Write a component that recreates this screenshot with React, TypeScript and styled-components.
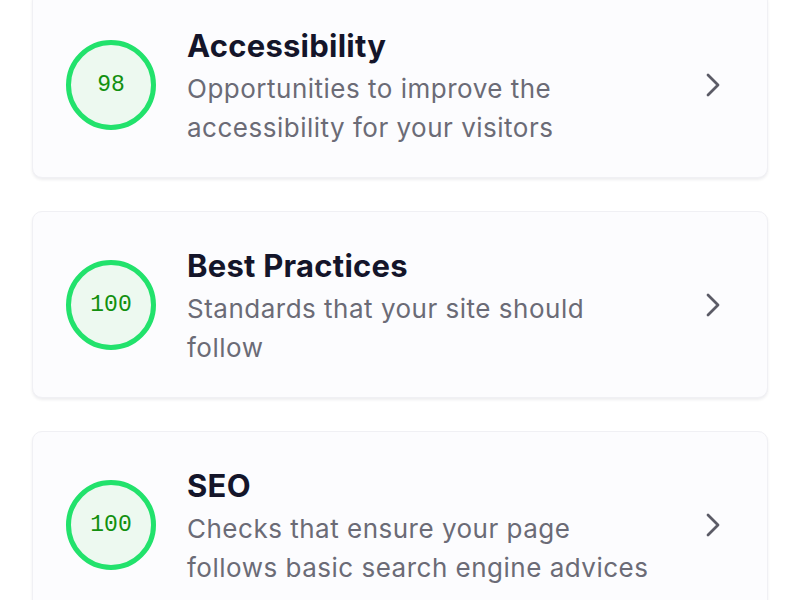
import React from 'react';
import styled, { createGlobalStyle } from 'styled-components';

type Audit = {
  score: number,
  title: string,
  description: string,
};

const audits: Audit[] = [
  {
    score: 98,
    title: 'Accessibility',
    description: 'Opportunities to improve the accessibility for your visitors',
  },
  {
    score: 100,
    title: 'Best Practices',
    description: 'Standards that your site should follow',
  },
  {
    score: 100,
    title: 'SEO',
    description: 'Checks that ensure your page follows basic search engine advices',
  },
];

const Chevron = () => (
  <svg width="16" height="26" viewBox="0 0 16 26" fill="none">
    <polyline
      points="3,3 13,13 3,23"
      stroke="#5b5b66"
      strokeWidth="2.8"
      strokeLinecap="round"
      strokeLinejoin="round"
    />
  </svg>
);

export default function App() {
  return (
    <>
      <GlobalStyle />
      <Page>
        <AuditList>
          {audits.map((audit) => (
            <AuditCard key={audit.title}>
              <ScoreRing>
                <Score>{audit.score}</Score>
              </ScoreRing>
              <AuditText>
                <AuditTitle>{audit.title}</AuditTitle>
                <AuditDescription>{audit.description}</AuditDescription>
              </AuditText>
              <ChevronWrapper>
                <Chevron />
              </ChevronWrapper>
            </AuditCard>
          ))}
        </AuditList>
      </Page>
    </>
  );
}

const GlobalStyle = createGlobalStyle`
  * {
    box-sizing: border-box;
  }
  html, body {
    margin: 0;
    padding: 0;
    height: 100%;
    overflow: hidden;
    background: #ffffff;
  }
  body {
    font-family: Inter, 'Noto Sans', sans-serif;
  }
`;

const Page = styled.div`
  width: 800px;
  height: 600px;
  overflow: hidden;
  padding: 0 32px;
  background: #ffffff;
`;

const AuditList = styled.div`
  display: flex;
  flex-direction: column;
  gap: 33px;
  margin-top: -9px;
`;

const AuditCard = styled.div`
  display: flex;
  align-items: center;
  height: 187px;
  padding: 0 46px 0 33px;
  background: #fcfcfe;
  border: 1px solid #f0f0f4;
  border-radius: 10px;
  box-shadow: 0 2px 3px rgba(20, 20, 40, 0.07);
`;

const ScoreRing = styled.div`
  width: 90px;
  height: 90px;
  flex-shrink: 0;
  border-radius: 50%;
  border: 5px solid #22e26c;
  background: #edf9f0;
  display: flex;
  align-items: center;
  justify-content: center;
`;

const Score = styled.span`
  font-family: 'Liberation Mono', 'DejaVu Sans Mono', monospace;
  font-size: 23px;
  color: #12900f;
`;

const AuditText = styled.div`
  flex: 1;
  padding: 7px 0 0 31px;
`;

const AuditTitle = styled.div`
  font-family: Inter, sans-serif;
  font-weight: 700;
  font-size: 31px;
  line-height: 34px;
  letter-spacing: 0.25px;
  color: #14152a;
`;

const AuditDescription = styled.div`
  margin-top: 6px;
  max-width: 466px;
  font-family: Inter, sans-serif;
  font-size: 26px;
  line-height: 39px;
  letter-spacing: 0.5px;
  color: #6b6b76;
`;

const ChevronWrapper = styled.div`
  display: flex;
  align-items: center;
  margin-left: 16px;
`;
